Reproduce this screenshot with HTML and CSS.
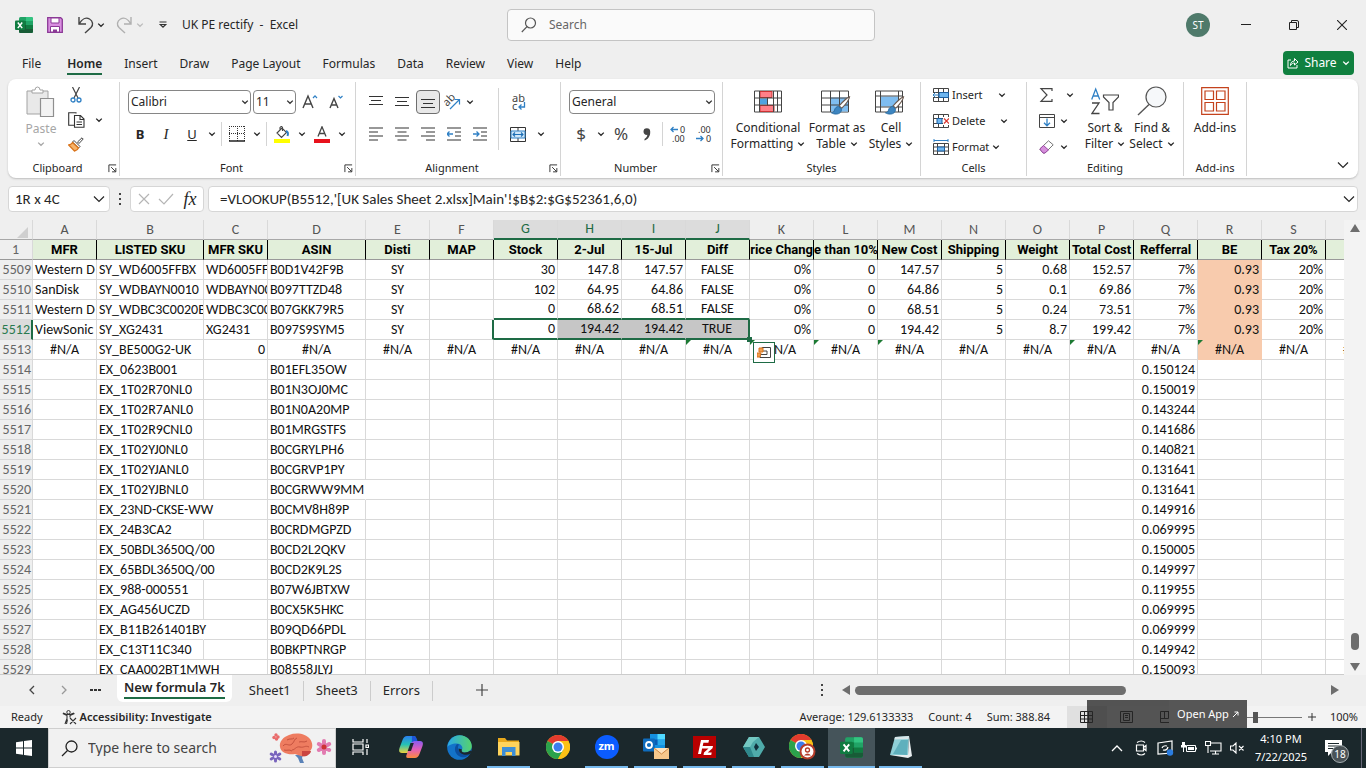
FILE: index.html
```html
<!DOCTYPE html>
<html lang="en">
<head>
<meta charset="utf-8">
<title>UK PE rectify - Excel</title>
<link rel="stylesheet" href="styles.css">
</head>
<body>
<svg class="defs" aria-hidden="true">
  <symbol id="chev" viewBox="0 0 8 8"><path d="M1.2 2.6 4 5.3 6.8 2.6" fill="none" stroke="currentColor" stroke-width="1.3"/></symbol>
  <symbol id="chevl" viewBox="0 0 12 12"><path d="M1 3.500 6 8.500l5-5" fill="none" stroke="currentColor" stroke-width="1.200"/></symbol>
  <symbol id="launch" viewBox="0 0 10 10"><path d="M1 9V1h8M3.500 3.500 8.300 8.300M4.500 8.700h4.200V4.500" fill="none" stroke="currentColor"/></symbol>
  <symbol id="brush" viewBox="0 0 24 22"><path d="M22.500 1.500c-3 .8-8 6-11.500 10l3 2.500c4-4 8-9.500 8.500-12.500z" fill="#fff" stroke="#6b5a50" stroke-width="1.200"/><path d="M10.500 12c-2 0-4 1.500-4.500 4-.3 1.700-1.800 2.800-3.500 3 3 2 8 2 10-.5 1.300-1.600 1.300-3 .8-4.200z" fill="#3d85c0" stroke="#26699f"/></symbol>
  <symbol id="excel" viewBox="0 0 18 18"><rect x="4" y="1" width="14" height="16" rx="1.500" fill="#21a366"/><path d="M11 1h5.500A1.500 1.500 0 0 1 18 2.500V5h-7z" fill="#33c481"/><path d="M4 5h7v4H4z" fill="#107c41"/><path d="M11 9h7v4h-7z" fill="#107c41"/><path d="M4 9h7v8H5.500A1.500 1.500 0 0 1 4 15.500zM11 13h7v2.500a1.500 1.500 0 0 1-1.500 1.500H11z" fill="#185c37"/><rect y="4.500" width="10" height="9.500" rx="1" fill="#107c41"/><path d="m2.800 6.500 4.400 5.600M7.200 6.500l-4.400 5.600" stroke="#fff" stroke-width="1.500"/></symbol>
  <symbol id="chrome" viewBox="0 0 24 24"><circle cx="12" cy="12" r="12" fill="#fbc116"/><path d="M12 12 1.600 6A12 12 0 0 1 22.400 6z" fill="#e33b2e"/><path d="M1.600 6A12 12 0 0 0 12 24l5.200-9z" fill="#2ba24c"/><path d="M12 6h10.400A12 12 0 0 1 12 24l5.200-9z" fill="#fbc116"/><circle cx="12" cy="12" r="6" fill="#fff"/><circle cx="12" cy="12" r="4.500" fill="#3b7ded"/></symbol>
</svg>

<header class="titlebar">
  <div class="quick">
    <svg width="18" height="18"><use href="#excel"/></svg>
    <button aria-label="Save"><svg width="16" height="16" viewBox="0 0 16 16"><path d="M.7.7h13l1.600 1.600v13H.7z" fill="#d98fe0" stroke="#8b3a96" stroke-width="1.300"/><path d="M4 1h8v5H4zM3.500 9.500h9V15h-9z" fill="#fff" stroke="#8b3a96"/><path d="M6 12.500h4V15H6z" fill="#8b3a96"/></svg></button>
    <button class="undo" aria-label="Undo"><svg width="17" height="18" viewBox="0 0 17 18"><path d="M2 1v7h7M2.300 7.700C5 3 9 1 12.500 3s4 6 1.500 8.500L8 17" fill="none" stroke="#444" stroke-width="1.400"/></svg><svg width="8" height="8"><use href="#chev"/></svg></button>
    <button class="redo" aria-label="Redo"><svg width="17" height="18" viewBox="0 0 17 18"><path d="M15 1v7H8M14.700 7.700C12 3 8 1 4.500 3s-4 6-1.500 8.500L9 17" fill="none" stroke="#b0b0b0" stroke-width="1.400"/></svg><svg width="8" height="8"><use href="#chev"/></svg></button>
    <button aria-label="Customize"><svg width="10" height="8" viewBox="0 0 10 8"><path d="M1.500 1h7M2.300 3.500 5 6.200l2.700-2.700z" fill="none" stroke="#333" stroke-width="1.200"/></svg></button>
    <span class="doc">UK PE rectify&nbsp; -&nbsp; Excel</span>
  </div>
  <label class="search"><svg width="16" height="16" viewBox="0 0 16 16"><circle cx="9.500" cy="6" r="5" fill="none" stroke="#555" stroke-width="1.200"/><path d="M6 9.700.8 15" stroke="#555" stroke-width="1.200"/></svg><input type="text" placeholder="Search" aria-label="Search"></label>
  <div class="window">
    <span class="avatar">ST</span>
    <button aria-label="Minimize"><svg width="10" height="10"><path d="M0 4.500h10" stroke="#222"/></svg></button>
    <button aria-label="Restore"><svg width="10" height="10" viewBox="0 0 10 10"><path d="M.5 2.500h7v7h-7zM2.500 2.500V.5h5.500q1.500 0 1.500 1.500v5.500H7.500" fill="none" stroke="#222"/></svg></button>
    <button aria-label="Close"><svg width="10" height="10"><path d="m0 0 10 10M10 0 0 10" stroke="#222" stroke-width="1.100"/></svg></button>
  </div>
</header>

<nav class="menu">
  <a href="#">File</a><a href="#" class="on">Home</a><a href="#">Insert</a><a href="#">Draw</a><a href="#">Page Layout</a><a href="#">Formulas</a><a href="#">Data</a><a href="#">Review</a><a href="#">View</a><a href="#">Help</a>
  <button class="share"><svg width="12" height="12" viewBox="0 0 12 12"><path d="M4 3H1v8h9V8M3.500 8.500C3.500 5.500 5 4 7.500 4V1.500L11 5 7.500 8V6C6 6 4.500 6.500 3.500 8.500z" fill="none" stroke="#fff"/></svg>Share<svg width="8" height="8"><use href="#chev"/></svg></button>
</nav>

<section class="ribbon">
  <div class="group clip">
    <div class="body">
      <button class="paste"><svg width="30" height="32" viewBox="0 0 30 32"><path d="M1 5h21v23H1z" fill="#e9e9e9" stroke="#a3a3a3"/><path d="M6 7V4h3q0-3 2.500-3T14 4h3v3z" fill="#fff" stroke="#a3a3a3"/><path d="M14.500 12.500h13v18h-13z" fill="#f3f3f3" stroke="#8f8f8f" stroke-width="1.200"/></svg><span>Paste</span><svg width="8" height="8"><use href="#chev"/></svg></button>
      <div class="stack">
        <button aria-label="Cut"><svg width="12" height="16" viewBox="0 0 12 16"><path d="M2.500 0 8 11M9.500 0 4 11" stroke="#444" stroke-width="1.200"/><circle cx="3" cy="13" r="2" fill="none" stroke="#2f80c5" stroke-width="1.300"/><circle cx="9" cy="13" r="2" fill="none" stroke="#2f80c5" stroke-width="1.300"/></svg></button>
        <button aria-label="Copy"><svg width="17" height="16" viewBox="0 0 17 16"><path d="M8 1.500V.7H.7v12.500H6M6.500 3.500h6l3.500 3.500v8.300H6.500zM12 3.500V7.500h4M8.500 10h5.500M8.500 12.500h5.500" fill="none" stroke="#333" stroke-width="1.100"/></svg></button>
        <button aria-label="Format Painter"><svg width="16" height="15" viewBox="0 0 16 15"><path d="M9.500 5 14 .8l1.200 1.200L11 6.500z" fill="#fff" stroke="#444"/><path d="m6 3.500 6 6-1.500 1.500-6-6z" fill="#fff" stroke="#444"/><path d="M4.500 5.500C3.500 7 2 7.800.7 8L6.500 14c2-.5 3.300-1.500 4-3z" fill="#f6b36a" stroke="#d9731a" stroke-width="1.300"/></svg></button>
      </div>
      <button class="ch" aria-label="Copy options"><svg width="8" height="8"><use href="#chev"/></svg></button>
    </div>
    <div class="cap"><span>Clipboard</span><button aria-label="Clipboard settings"><svg width="9" height="9"><use href="#launch"/></svg></button></div>
  </div>

  <div class="group font">
    <div class="body rows">
      <div class="row"><select class="fname" aria-label="Font"><option>Calibri</option></select><select class="fsize" aria-label="Font size"><option>11</option></select>
        <button class="ib grow" aria-label="Increase font size"><svg width="16" height="16" viewBox="0 0 16 16"><path d="M1 14 6 2l5 12M2.800 10h6.400" fill="none" stroke="#444" stroke-width="1.400"/><path d="m11 4 2-2.200L15 4" fill="none" stroke="#2f80c5" stroke-width="1.200"/></svg></button>
        <button class="ib" aria-label="Decrease font size"><svg width="14" height="16" viewBox="0 0 14 16"><path d="M1 14 5 4.500 9 14M2.500 11h5" fill="none" stroke="#444" stroke-width="1.400"/><path d="m9.500 2 2 2 2-2" fill="none" stroke="#2f80c5" stroke-width="1.200"/></svg></button></div>
      <div class="row"><button class="ib glyph"><b>B</b></button><button class="ib glyph"><i>I</i></button><button class="ib glyph"><u>U</u></button><button class="ch" aria-label="Underline options"><svg width="8" height="8"><use href="#chev"/></svg></button><span class="sep"></span>
        <button class="ib" aria-label="Borders"><svg width="16" height="16" viewBox="0 0 16 16"><path d="M0 .5h16M0 7.500h16M.5 0v15M8.500 0v15M15.500 0v15" fill="none" stroke="#333" stroke-dasharray="1 1"/><path d="M0 15h16" stroke="#222" stroke-width="1.500"/></svg></button><button class="ch" aria-label="Border options"><svg width="8" height="8"><use href="#chev"/></svg></button><span class="sep"></span>
        <button class="ib" aria-label="Fill color"><svg width="16" height="17" viewBox="0 0 16 17"><path d="m3 7 5-5 4.500 4.500-5 5zM6 4V1.500q1.500-2 2.500 0V5" fill="#fff" stroke="#444" stroke-width="1.100"/><path d="M12 5q3 1 1.500 5" fill="none" stroke="#2f80c5" stroke-width="2"/><path d="M0 13h16v4H0z" fill="#ff0"/></svg></button><button class="ch" aria-label="Fill options"><svg width="8" height="8"><use href="#chev"/></svg></button>
        <button class="ib" aria-label="Font color"><svg width="16" height="17" viewBox="0 0 16 17"><path d="M4 10.500 8 .8l4 9.700M5.300 7.500h5.400" fill="none" stroke="#444" stroke-width="1.300"/><path d="M0 13h16v4H0z" fill="#e8111c"/></svg></button><button class="ch" aria-label="Font color options"><svg width="8" height="8"><use href="#chev"/></svg></button></div>
    </div>
    <div class="cap"><span>Font</span><button aria-label="Font settings"><svg width="9" height="9"><use href="#launch"/></svg></button></div>
  </div>

  <div class="group align">
    <div class="body two">
      <div class="rows">
      <div class="row"><button class="ib" aria-label="Top align"><svg width="14" height="14"><path d="M0 1.500h14M2 5.500h10M0 9.500h14" stroke="#333" stroke-width="1.200"/></svg></button><button class="ib" aria-label="Middle align"><svg width="14" height="14"><path d="M0 2.500h14M2 6.500h10M0 10.500h14" stroke="#333" stroke-width="1.200"/></svg></button><button class="ib on" aria-label="Bottom align"><svg width="14" height="14"><path d="M0 4.500h14M2 8.500h10M0 12.500h14" stroke="#333" stroke-width="1.200"/></svg></button>
        <button class="ib orient" aria-label="Orientation"><svg width="17" height="16" viewBox="0 0 17 16"><text x="0" y="10" transform="rotate(-45 5 8)" class="ab">ab</text><path d="m6 15 9-9M10.500 5.500h5v5" fill="none" stroke="#2f80c5" stroke-width="1.200"/></svg></button><button class="ch" aria-label="Orientation options"><svg width="8" height="8"><use href="#chev"/></svg></button></div>
      <div class="row"><button class="ib" aria-label="Align left"><svg width="14" height="14"><path d="M0 1h14M0 5h9M0 9h14M0 13h9" stroke="#333" stroke-width="1.200"/></svg></button><button class="ib" aria-label="Center"><svg width="14" height="14"><path d="M0 1h14M2.500 5h9M0 9h14M2.500 13h9" stroke="#333" stroke-width="1.200"/></svg></button><button class="ib" aria-label="Align right"><svg width="14" height="14"><path d="M0 1h14M5 5h9M0 9h14M5 13h9" stroke="#333" stroke-width="1.200"/></svg></button><button class="ib" aria-label="Decrease indent"><svg width="14" height="14"><path d="M0 1h14M8 5h6M8 9h6M0 13h14" stroke="#333" stroke-width="1.200"/><path d="M0 7h6M2.500 4.500 0 7l2.500 2.500" fill="none" stroke="#2f80c5" stroke-width="1.300"/></svg></button><button class="ib" aria-label="Increase indent"><svg width="14" height="14"><path d="M0 1h14M8 5h6M8 9h6M0 13h14" stroke="#333" stroke-width="1.200"/><path d="M0 7h6M3.500 4.500 6 7 3.500 9.500" fill="none" stroke="#2f80c5" stroke-width="1.300"/></svg></button></div>
      </div><span class="sep tall"></span>
      <div class="rows">
      <div class="row"><button class="ib" aria-label="Wrap text"><svg width="15" height="18" viewBox="0 0 15 18"><text x="1" y="9" class="ab">ab</text><text x="1" y="17" class="ab">c</text><path d="M13.500 9v5H8M10.500 11.500 8 14l2.500 2.500" fill="none" stroke="#2f80c5" stroke-width="1.300"/></svg></button></div>
      <div class="row"><button class="ib" aria-label="Merge"><svg width="16" height="15" viewBox="0 0 16 15"><path d="M.5.5h15v14H.5zM8 .5V4M8 11v3.500" fill="#fff" stroke="#333"/><path d="M1 4h14v7H1z" fill="#cfe6f8" stroke="#2f80c5"/><path d="M3 7.500h10M5 5.500l-2 2 2 2M11 5.500l2 2-2 2" fill="none" stroke="#1d6fb5" stroke-width="1.100"/></svg></button><button class="ch wide" aria-label="Merge options"><svg width="8" height="8"><use href="#chev"/></svg></button></div>
      </div>
    </div>
    <div class="cap"><span>Alignment</span><button aria-label="Alignment settings"><svg width="9" height="9"><use href="#launch"/></svg></button></div>
  </div>

  <div class="group number">
    <div class="body rows">
      <div class="row"><select class="fmt" aria-label="Number format"><option>General</option></select></div>
      <div class="row"><button class="ib big">$</button><button class="ch" aria-label="Currency options"><svg width="8" height="8"><use href="#chev"/></svg></button><button class="ib big">%</button><button class="ib" aria-label="Comma style"><svg width="8" height="13" viewBox="0 0 8 13"><path d="M.5 3.500a3.300 3.300 0 0 1 6.700 0C7.500 8 5 11.500 1.500 12.500V11C3.500 10 4.200 8.500 4.300 6.800 2.500 7.200.5 6 .5 3.500z" fill="#444"/></svg></button><span class="sep"></span>
        <button class="ib" aria-label="Increase decimal"><svg width="17" height="18" viewBox="0 0 17 18"><path d="M1 4.500h7M3.500 2 1 4.500 3.500 7" fill="none" stroke="#2f80c5" stroke-width="1.300"/><text x="10" y="8" class="num">0</text><text x="2" y="17" class="num">.00</text></svg></button><button class="ib" aria-label="Decrease decimal"><svg width="17" height="18" viewBox="0 0 17 18"><text x="2" y="8" class="num">.00</text><path d="M0 13.500h7M4.500 11 7 13.500 4.500 16" fill="none" stroke="#2f80c5" stroke-width="1.300"/><text x="10" y="17" class="num">0</text></svg></button></div>
    </div>
    <div class="cap"><span>Number</span><button aria-label="Number settings"><svg width="9" height="9"><use href="#launch"/></svg></button></div>
  </div>

  <div class="group styles">
    <div class="body">
      <button class="large w1"><svg width="28" height="27" viewBox="0 0 28 27"><path d="M.5 3.500h27v21H.5z" fill="#fff" stroke="#444"/><path d="M6 4h12v6H6zM6 18h14v6H6z" fill="#ff8088" stroke="#c33"/><path d="M6 11h7v6H6z" fill="#4fa3e0"/><path d="M5.500 3.500v21M13.500 10v8M19.500 3.500v21M23.500 3.500v21M.5 10.500h27M.5 17.500h27" fill="none" stroke="#444"/></svg><span>Conditional</span><span>Formatting <svg width="8" height="8"><use href="#chev"/></svg></span></button>
      <button class="large w2"><svg width="32" height="27" viewBox="0 0 32 27"><path d="M.5 3.500h27v21H.5z" fill="#fff" stroke="#444"/><path d="M10 10h17v14H10z" fill="#7fbdf0"/><path d="M9.500 3.500v21M18.500 3.500v21M.5 10.500h27M.5 17.500h27" fill="none" stroke="#444"/><use href="#brush" x="7" y="8" width="24" height="20"/></svg><span>Format as</span><span>Table <svg width="8" height="8"><use href="#chev"/></svg></span></button>
      <button class="large w3"><svg width="32" height="27" viewBox="0 0 32 27"><path d="M.5 3.500h27v21H.5z" fill="#fff" stroke="#444"/><path d="M6 9h17v10H6z" fill="#7fbdf0"/><path d="M5.500 3.500v21M23.500 3.500v21M.5 8.500h27M.5 19.500h27" fill="none" stroke="#444"/><use href="#brush" x="7" y="8" width="24" height="20"/></svg><span>Cell</span><span>Styles <svg width="8" height="8"><use href="#chev"/></svg></span></button>
    </div>
    <div class="cap plain"><span>Styles</span></div>
  </div>

  <div class="group cells">
    <div class="body stack">
      <button><svg width="16" height="14" viewBox="0 0 16 14"><path d="M.5.5h15v13H.5zM5.500.5v13M10.500.5v13M.5 4.500h15M.5 9.500h15" fill="#fff" stroke="#444"/><path d="M6 4.500h9.500v5H6z" fill="#6fb6ef" stroke="#1d5fa0"/><path d="M0 5h5v4H0z" fill="#fff"/><path d="M0 7h6M2.500 4.500 0 7l2.500 2.500" fill="none" stroke="#2f80c5"/></svg><span class="lb">Insert</span><svg class="far" width="8" height="8"><use href="#chev"/></svg></button>
      <button><svg width="16" height="14" viewBox="0 0 16 14"><path d="M.5.500h15v13H.5zM5.500.5v13M10.500.5v13M.5 4.500h15M.5 9.500h15" fill="#fff" stroke="#444"/><path d="M4 4.500h5v5H4z" fill="#6fb6ef" stroke="#1d5fa0"/><path d="M10 3h6v8h-6z" fill="#fff"/><path d="m11 4.500 5 5M16 4.500l-5 5" stroke="#d9362f" stroke-width="1.200"/></svg><span class="lb">Delete</span><svg class="far" width="8" height="8"><use href="#chev"/></svg></button>
      <button><svg width="16" height="16" viewBox="0 0 16 16"><path d="M.5 4.500h15v11H.5zM4.500 4.500v11M11.500 4.500v11M.5 8h15M.5 12h15" fill="#fff" stroke="#444"/><path d="M4.500 8h7v4h-7z" fill="#6fb6ef" stroke="#1d5fa0"/><path d="M1 1.500h14M1 0v3M15 0v3" stroke="#2f80c5"/></svg><span class="lb">Format</span><svg width="8" height="8"><use href="#chev"/></svg></button>
    </div>
    <div class="cap plain"><span>Cells</span></div>
  </div>

  <div class="group editing">
    <div class="body">
      <div class="stack">
        <button class="sum" aria-label="AutoSum"><svg width="16" height="14" viewBox="0 0 16 14"><path d="M13 3V.7H2L8 7l-6 6.300h11V11" fill="none" stroke="#444" stroke-width="1.200"/></svg><svg width="8" height="8"><use href="#chev"/></svg></button>
        <button aria-label="Fill"><svg width="16" height="14" viewBox="0 0 16 14"><path d="M.5.5h15v13H.5zM.5 3.500h15" fill="#fff" stroke="#444"/><path d="M8 4.500v7M5 8.800l3 3 3-3" fill="none" stroke="#2f80c5" stroke-width="1.300"/></svg><svg width="8" height="8"><use href="#chev"/></svg></button>
        <button aria-label="Clear"><svg width="16" height="14" viewBox="0 0 16 14"><path d="M.8 9 9.500.8l4.700 4L6 13H4z" fill="#fff" stroke="#777"/><path d="m.8 9 3.700-3.500L9.500 10 6 13H4z" fill="#d68fdc" stroke="#9a4ba3"/></svg><svg width="8" height="8"><use href="#chev"/></svg></button>
      </div>
      <button class="large w4"><svg width="28" height="27" viewBox="0 0 28 27"><path d="m.7 12 4-10.500L8.700 12M2 8.500h5.300" fill="none" stroke="#2f80c5" stroke-width="1.300"/><path d="M1 15.500h7L1 26h7.500" fill="none" stroke="#444" stroke-width="1.300"/><path d="M12.500 7.500h15v2L22 15v7.500h-4V15l-5.500-5.500z" fill="#fff" stroke="#444" stroke-width="1.200"/></svg><span>Sort &amp;</span><span>Filter <svg width="8" height="8"><use href="#chev"/></svg></span></button>
      <button class="large w5"><svg width="30" height="30" viewBox="0 0 30 30"><circle cx="19" cy="11" r="10" fill="#f6f8fa" stroke="#555" stroke-width="1.200"/><path d="M12 18.500 1 29" stroke="#555" stroke-width="1.400"/></svg><span>Find &amp;</span><span>Select <svg width="8" height="8"><use href="#chev"/></svg></span></button>
    </div>
    <div class="cap plain"><span>Editing</span></div>
  </div>

  <div class="group addins">
    <div class="body">
      <button class="large w6"><svg width="28" height="28" viewBox="0 0 28 28"><path d="M.7.7h26.600v26.600H.7zM4 4h8.500v8.500H4zM15.500 4H24v8.500h-8.500zM4 15.500h8.500V24H4zM15.500 15.500H24V24h-8.500z" fill="none" stroke="#c4421c" stroke-width="1.200"/></svg><span>Add-ins</span></button>
    </div>
    <div class="cap plain"><span>Add-ins</span></div>
  </div>
  <button class="collapse" aria-label="Collapse ribbon"><svg width="12" height="12"><use href="#chevl"/></svg></button>
</section>

<section class="formula">
  <div class="box namebox"><input type="text" value="1R x 4C" aria-label="Name box"><button aria-label="Names"><svg width="12" height="12"><use href="#chevl"/></svg></button></div>
  <svg class="dots" width="4" height="14"><path d="M1 1h2v2H1zM1 6h2v2H1zM1 11h2v2H1z" fill="#444"/></svg>
  <div class="box tools"><button aria-label="Cancel"><svg width="12" height="12"><path d="m1 1 10 10M11 1 1 11" stroke="#b5b5b5" stroke-width="1.200"/></svg></button><button aria-label="Enter"><svg width="16" height="12"><path d="m1 6 5 5L15 1" fill="none" stroke="#b5b5b5" stroke-width="1.200"/></svg></button><button class="fx"><i>fx</i></button></div>
  <div class="box formbox"><input type="text" value="=VLOOKUP(B5512,'[UK Sales Sheet 2.xlsx]Main'!$B$2:$G$52361,6,0)" aria-label="Formula"><button aria-label="Expand"><svg width="12" height="12"><use href="#chevl"/></svg></button></div>
</section>

<main class="sheet">
  <div class="gridwrap">
    <table class="grid"><colgroup id="cols"></colgroup><thead id="letters"></thead><tbody id="cells"></tbody></table>
  </div>
  <div class="vscroll"><svg width="10" height="8"><path d="M0 8 5 0l5 8z" fill="#6e6e6e"/></svg><span class="track"></span><span class="thumb"></span><svg width="10" height="8"><path d="m0 0 5 8 5-8z" fill="#6e6e6e"/></svg></div>
</main>

<section class="sheets">
  <button aria-label="Previous sheet"><svg width="8" height="10"><path d="M6 1 2 5l4 4" fill="none" stroke="#444" stroke-width="1.300"/></svg></button>
  <button aria-label="Next sheet"><svg width="8" height="10"><path d="m2 1 4 4-4 4" fill="none" stroke="#999" stroke-width="1.300"/></svg></button>
  <button aria-label="More sheets"><svg width="12" height="4"><path d="M0 1h3v2H0zM4 1h3v2H4zM8 1h3v2H8z" fill="#333"/></svg></button>
  <a href="#" class="on"><span>New formula 7k</span></a><a href="#">Sheet1</a><a href="#">Sheet3</a><a href="#">Errors</a>
  <button class="plus" aria-label="New sheet"><svg width="12" height="12"><path d="M6 0v12M0 6h12" stroke="#444" stroke-width="1.200"/></svg></button>
  <div class="hscroll"><svg class="dots" width="4" height="14"><path d="M1 1h2v2H1zM1 6h2v2H1zM1 11h2v2H1z" fill="#444"/></svg><svg width="8" height="10"><path d="M8 0 0 5l8 5z" fill="#6e6e6e"/></svg><span class="bar"><span class="thumb"></span></span><svg width="8" height="10"><path d="m0 0 8 5-8 5z" fill="#6e6e6e"/></svg></div>
</section>

<footer class="status">
  <span>Ready</span>
  <button class="acc"><svg width="15" height="15" viewBox="0 0 15 15"><circle cx="6.500" cy="2.200" r="1.700" fill="none" stroke="#333"/><path d="M.8 3.500 5 5.500v3L3 14M12.500 3.500 8 5.500v2M1 3l4 1.500h3L12 3M5.500 9.500 4.500 14M8 8l6 6M14 8l-6 6" fill="none" stroke="#333" stroke-width="1.100"/></svg><b>Accessibility: Investigate</b></button>
  <div class="stats"><span>Average: 129.6133333</span><span>Count: 4</span><span>Sum: 388.84</span></div>
  <div class="views">
    <button class="on" aria-label="Normal"><svg width="13" height="12"><path d="M.5.500h12v11H.5zM4.500.5v11M8.500.5v11M.5 4.500h12M.5 8h12" fill="none" stroke="#222"/></svg></button>
    <button aria-label="Page layout"><svg width="13" height="12"><path d="M.5.500h12v11H.5zM3.500 2.500h6v7h-6zM5 4.500h3M5 6.500h3" fill="none" stroke="#222"/></svg></button>
    <button aria-label="Page break"><svg width="13" height="12"><path d="M.5.500h12v11H.5zM4.500.5v7M8.500.5v7M.5 7.500h8" fill="none" stroke="#222"/></svg></button>
  </div>
  <input class="zoom" type="range" min="0" max="100" value="60" aria-label="Zoom">
  <button class="zin" aria-label="Zoom in"><svg width="8" height="8"><path d="M4 0v8M0 4h8" stroke="#333"/></svg></button>
  <span class="pct100">100%</span>
  <div class="openapp"><a href="#">Open App <svg width="7" height="7"><path d="M1 6 6 1M2.500 1H6v3.500" fill="none" stroke="#fff"/></svg></a></div>
</footer>

<div class="taskbar">
  <button class="start" aria-label="Start"><svg width="16" height="16" viewBox="0 0 16 16"><path d="M0 2.300 7 1.200v6.300H0zM8 1l8-1v7.500H8zM0 8.500h7v6.300L0 13.700zM8 8.500h8V16l-8-1z" fill="#fff"/></svg></button>
  <label class="tsearch"><svg width="17" height="17" viewBox="0 0 17 17"><circle cx="10.500" cy="6.500" r="5.500" fill="none" stroke="#222" stroke-width="1.300"/><path d="M6.500 10.500 1 16" stroke="#222" stroke-width="1.300"/></svg><input type="text" placeholder="Type here to search" aria-label="Type here to search">
    <svg width="66" height="32" viewBox="0 0 66 32"><g fill="#e96b6b"><circle cx="8" cy="3" r="1.700"/><circle cx="10" cy="5" r="1.700"/><circle cx="6" cy="5.500" r="1.700"/><circle cx="8.500" cy="7" r="1.700"/></g><path d="M27 23h8l-1 3 2 5h-4l-2-5z" fill="#5b83b8"/><path d="M12 15c-1-5 3-10 9-12 8-3 17-1 21 4 3 4 3 9 0 12-1 4-5 6-9 5l-6-2c-7 1-14-1-15-7z" fill="#ee7c60"/><path d="M34 19h9c-1 4-5 6-9 5z" fill="#cb4540"/><path d="M15 14c3-4 6 1 9-2s2-5 5-6M19 8c3-2 5 0 7-2M24 18c3 0 4-4 8-3s5-2 9 0M31 10c3-1 5 1 8-1M16 18c3 1 5-1 8 1" fill="none" stroke="#c5523f"/><g stroke="#7964bd" stroke-width="3" stroke-linecap="round"><path d="M7.500 20v9M3.200 22l8.600 5M3.200 27l8.600-5"/></g><circle cx="7.500" cy="24.500" r="1.500" fill="#e8d9ff"/><g stroke="#e27bb0" stroke-width="4" stroke-linecap="round"><path d="M56 9v12M50.800 12l10.400 6M50.800 18l10.400-6"/></g><circle cx="56" cy="15" r="2.500" fill="#c33"/></svg></label>
  <button class="task" aria-label="Task view"><svg width="17" height="16" viewBox="0 0 17 16"><path d="M1 0v3h10V0M1 16v-3h10v3M1 5h10v6H1zM15 0v4M15 10v6M14 6h2.500v2.500H14z" fill="none" stroke="#fff" stroke-width="1.200"/></svg></button>
  <button class="task" aria-label="Copilot"><svg width="24" height="22" viewBox="0 0 24 22"><defs><linearGradient id="cp1" x1="0" y1="0" x2="0" y2="1"><stop offset="0" stop-color="#2a7ff0"/><stop offset=".5" stop-color="#25c2b5"/><stop offset="1" stop-color="#ecd23c"/></linearGradient><linearGradient id="cp2" x1="0" y1="0" x2="0" y2="1"><stop offset="0" stop-color="#8a5bf0"/><stop offset=".5" stop-color="#e45fb8"/><stop offset="1" stop-color="#fa8a3c"/></linearGradient></defs><path d="M8 0h7q2.500 0 1.500 3l-4 11q-1 3-4 3H3q-4 0-2.500-5L3.500 4Q5 0 8 0z" fill="url(#cp1)"/><path d="M16 22H9q-2.500 0-1.500-3l4-11q1-3 4-3H21q4 0 2.500 5l-3 8q-1.500 4-4.500 4z" fill="url(#cp2)"/><path d="M13 0h2q2 0 2.700 2.500L18.500 5h-3q-2 0-2.700 1.500z" fill="#1d55d8"/><path d="M11.500 7h3.300L12 15H8.700z" fill="#1b282c"/></svg></button>
  <button class="task" aria-label="Edge"><svg width="25" height="25" viewBox="0 0 25 25"><defs><linearGradient id="eg" x1="0" y1="0" x2="1" y2="0"><stop offset="0" stop-color="#2aa8e8"/><stop offset="1" stop-color="#56d36c"/></linearGradient></defs><circle cx="12.500" cy="12.500" r="12.300" fill="#1373c9"/><path d="M.3 12C1.500 4.500 7 .2 12.500.2 20 .2 25 6 24.800 11.500c-.3 4-4 6-7.500 6-2.500 0-3.500-1.500-2.500-2.500 2-3-1-6.500-5-6.500-5 0-8.500 2-9.500 3.500z" fill="url(#eg)"/><path d="M10 9c-4 4-2 11 4 13 4 1.200 7.500-1 9.500-4 0 0-5 2-9 0-3.500-2-4.500-5.500-2.500-8.500z" fill="#0c4fa0"/><path d="M15 14.500c-1 1.500 0 3 2.500 3 2.500 0 4.500-.7 5.800-2l1.500 1-1.800 2.500c-2.500 1-6 1.200-8.700-.5-2-1.300-2.800-3-2.700-5z" fill="#1b282c"/></svg></button>
  <button class="task open" aria-label="File Explorer"><svg width="23" height="20" viewBox="0 0 23 20"><path d="M1 1h7l2 2.500h12V18H1z" fill="#e9a91c"/><path d="M1 5h21.500v13.500H1z" fill="#ffd45c"/><path d="M5 10h13.500v9H15v-4H8.500v4H5z" fill="#3e8fd6"/></svg></button>
  <button class="task" aria-label="Chrome"><svg width="24" height="24"><use href="#chrome"/></svg></button>
  <button class="task open" aria-label="Zoom"><span class="zm">zm</span></button>
  <button class="task open" aria-label="Outlook"><svg width="26" height="26" viewBox="0 0 26 26"><path d="M7 0h15v17H7z" fill="#1490df"/><path d="M14.500 0H22v5.500h-7.500z" fill="#50d9ff"/><path d="M14.500 5.500H22V11h-7.500z" fill="#28a8ea"/><path d="M7 5.500h7.500V11H7z" fill="#0a5db5"/><rect y="4.500" width="12" height="13" rx="1" fill="#0f6cbd"/><circle cx="6" cy="11" r="3" fill="none" stroke="#fff" stroke-width="1.800"/><path d="M11 14h15v11H11z" fill="#f7c88c"/><path d="m11 14 7.500 6 7.500-6" fill="#ffe2bb" stroke="#cf8945"/></svg></button>
  <button class="task open" aria-label="FileZilla"><svg width="23" height="22" viewBox="0 0 23 22"><path d="M0 0h23v22H0z" fill="#b80000"/><path d="M5 18 8 4h8l-.6 2.800h-5L9.700 10h4l-.6 2.500h-4L8 18zM13 10h7l-.5 2.300-4.800 4.200h4l-.5 2.500h-7.700l.5-2.500 4.500-4h-3z" fill="#fff"/></svg></button>
  <button class="task open" aria-label="Hex app"><svg width="22" height="20" viewBox="0 0 22 20"><path d="M6 0h10l6 10-6 10H6L0 10z" fill="#4fabaa"/><path d="M6 0h10l-6 5-3 5H0z" fill="#74c8c2"/><path d="M7 10l4 10H6L0 10z" fill="#2f888c"/><path d="m13 6 3 4-3 4-2-4z" fill="#10303c"/></svg></button>
  <button class="task open" aria-label="Chrome profile"><svg width="27" height="26" viewBox="0 0 27 26"><use href="#chrome" width="24" height="24"/><circle cx="18.500" cy="17.500" r="7" fill="#fff" stroke="#b43c2a" stroke-width="2"/><circle cx="18.500" cy="16" r="2" fill="none" stroke="#b43c2a" stroke-width="1.300"/><path d="M15 21.500q3.500-4 7 0z" fill="#b43c2a"/></svg></button>
  <button class="task open active" aria-label="Excel"><svg width="23" height="23"><use href="#excel"/></svg></button>
  <button class="task open" aria-label="Notepad"><svg width="24" height="23" viewBox="0 0 24 23"><path d="M6 1 20 0l-1 20-18-1z" fill="#8fd0d8"/><path d="m20 0 3 20-4 2-18-3 18 0z" fill="#e8eef0"/><path d="M6 1 20 0l-.4 3-14.300.5z" fill="#d9e6e8"/><path d="m12 4-8 14 14 1 1-15z" fill="#5fb0bd"/></svg></button>
  <div class="tray">
    <button aria-label="Hidden icons"><svg width="12" height="8"><path d="m1 7 5-5 5 5" fill="none" stroke="#fff" stroke-width="1.300"/></svg></button>
    <button aria-label="Meet"><svg width="13" height="16" viewBox="0 0 13 16"><path d="M1.500 5h7v6h-7zM8.500 7.500 11 5.500v5L8.500 8.500M2 2.500q4.500-3 8 0M2 13.500q4.500 3 8 0" fill="none" stroke="#fff" stroke-width="1.200"/></svg></button>
    <button aria-label="Sync"><svg width="17" height="16" viewBox="0 0 17 16"><path d="M1 3 15 1v12L1 14zM5 8q1-3 5-2M11 7q-1 4-5 3" fill="none" stroke="#fff" stroke-width="1.200"/><circle cx="13" cy="12.500" r="3.200" fill="#2b7de0"/></svg></button>
    <button aria-label="Battery"><svg width="16" height="12" viewBox="0 0 16 12"><path d="M5.500 3.500h9v6h-9zM15.500 5.500v2" fill="none" stroke="#fff"/><path d="M7 5h6v3H7zM1 0v3h3V0M0 3h5v2.500H0zM2 5h1v5H2z" fill="#fff"/></svg></button>
    <button aria-label="Network"><svg width="17" height="14" viewBox="0 0 17 14"><path d="M5 2h11v8H5M10.500 10v3M7 13h7M.5.5h5v4h-5zM3 4.500V12" fill="none" stroke="#fff" stroke-width="1.100"/></svg></button>
    <button aria-label="Volume muted"><svg width="15" height="12" viewBox="0 0 15 12"><path d="M.5 4h2.500l3-3v10l-3-3H.5zM9 4l4.500 4.500M13.500 4 9 8.500" fill="none" stroke="#fff" stroke-width="1.100"/></svg></button>
    <div class="clock"><span>4:10 PM</span><span>7/22/2025</span></div>
    <button class="note" aria-label="Notifications"><svg width="17" height="17" viewBox="0 0 17 17"><path d="M0 0h17v12H7l-4 4v-4H0z" fill="#fff"/><path d="M3 3.500h11M3 6h11M3 8.500h8" stroke="#1b282c"/></svg><span class="badge">18</span></button>
    <span class="edge"></span>
  </div>
</div>
<script src="app.js"></script>
</body>
</html>
```
FILE: styles.css
```css
* { box-sizing: border-box; }
body { margin: 0; height: 100vh; display: flex; flex-direction: column; overflow: hidden; background: #efefef; color: #262626; font: 12px/16px "Noto Sans", "Open Sans", sans-serif; }
button { border: 0; background: none; padding: 0; margin: 0; font: inherit; color: inherit; display: flex; align-items: center; justify-content: center; flex: none; }
input { font: inherit; color: inherit; border: 0; background: none; padding: 0; min-width: 0; outline: 0; }
a { color: inherit; text-decoration: none; }
svg { flex: none; display: block; }
.defs { position: absolute; width: 0; height: 0; }

.titlebar { height: 48px; flex: none; display: grid; grid-template-columns: 507fr 368px 491fr; align-items: center; padding-top: 1px; }
.quick { display: flex; align-items: center; padding-left: 15px; gap: 14px; }
.undo, .redo { gap: 3px; }
.redo { color: #bbb; }
.undo { margin-right: -3px; }
.search { display: flex; align-items: center; gap: 12px; height: 32px; padding: 0 13px; background: #fafafa; border: 1px solid #c4c4c4; border-radius: 4px; }
.search input { flex: 1; }
.search input::placeholder { color: #666; opacity: 1; }
.window { display: flex; justify-content: flex-end; align-items: center; }
.window button { width: 48px; height: 32px; }
.avatar { width: 24px; height: 24px; border-radius: 50%; background: #4f7a6b; color: #fff; font-size: 10px; line-height: 24px; text-align: center; margin-right: 12px; }

.menu { height: 31px; flex: none; display: flex; align-items: flex-start; padding: 3px 12px 0 22px; gap: 22px; }
.menu a { padding-top: 5px; height: 24px; }
.menu a:first-child { margin-right: 4px; }
.menu .on { font-weight: 600; border-bottom: 2px solid #1e6b45; }
.share { margin-left: auto; width: 71px; height: 24px; gap: 5px; background: #10803f; color: #fff; border-radius: 4px; }

.ribbon { margin: 0 8px; flex: none; height: 99px; display: flex; background: #fff; border-radius: 8px; box-shadow: 0 1px 2px #bdbdbd; }
.group { display: flex; flex-direction: column; flex: none; border-right: 1px solid #d4d4d4; margin: 3px 0 2px; }
.body { flex: 1; min-height: 0; display: flex; }
.cap { flex: none; display: flex; height: 16px; font-size: 11px; align-items: center; padding-left: 2px; }
.cap span { flex: 1; text-align: center; }
.cap button { width: 14px; height: 14px; }
.cap.plain { padding: 0; }
.clip { width: 112px; }
.font { width: 236px; }
.align { width: 205px; }
.number { width: 162px; }
.styles { width: 198px; }
.cells { width: 106px; }
.editing { width: 157px; }
.addins { width: 63px; }
.paste { flex-direction: column; justify-content: flex-start; color: #a6a6a6; width: 38px; margin-left: 14px; gap: 3px; padding-top: 4px; }
.stack { display: flex; flex-direction: column; }
.stack button { height: 26px; }
.clip .stack button { width: 32px; height: 25px; }
.clip .ch { margin-top: 31px; width: 14px; height: 14px; }
.rows { display: flex; flex-direction: column; gap: 6px; padding-top: 7px; }
.font .rows, .number .rows { padding-left: 7px; }
.row { display: flex; align-items: center; height: 26px; }
.ib { width: 26px; height: 26px; border-radius: 4px; }
.ib.on { width: 24px; height: 24px; margin: 0 1px; background: #e8e8e8; border: 1px solid #6e6e6e; }
.orient { width: 22px; }
.ch { width: 14px; height: 26px; }
.ch.wide { width: 20px; }
.glyph { font-size: 13px; }
.glyph i { font-family: "Liberation Serif", serif; font-size: 15px; }
.sep { width: 1px; height: 24px; background: #d4d4d4; margin: 0 2px; }
.sep.tall { height: 62px; margin: 6px 6px 0 5px; }
.two { padding-left: 7px; }
.ab { font: 11px "Noto Sans", sans-serif; fill: #444; }
.num { font: 9px "Noto Sans", sans-serif; fill: #333; }
select { appearance: none; font: inherit; color: inherit; height: 24px; border: 1px solid #868686; border-radius: 4px; padding: 0 2px; background: #fff url("data:image/svg+xml,%3Csvg xmlns='http://www.w3.org/2000/svg' width='8' height='8'%3E%3Cpath d='M1.200 2.600 4 5.300 6.800 2.600' fill='none' stroke='%23333' stroke-width='1.300'/%3E%3C/svg%3E") no-repeat right 1px center; }
.fname { width: 123px; margin-left: 1px; margin-right: 2px; }
.fsize { width: 43px; }
.grow { margin-left: 1px; }
.fmt { width: 146px; margin-left: 1px; }
.big { font-size: 17px; color: #444; }
.large { flex-direction: column; justify-content: flex-start; padding-top: 4px; }
.large > span { display: flex; align-items: center; gap: 4px; white-space: nowrap; }
.large > svg { height: 30px; margin-bottom: 4px; }
.w1 { width: 88px; }
.w2 { width: 50px; }
.w3 { width: 58px; }
.w4 { width: 50px; }
.w5 { width: 44px; }
.w6 { width: 62px; }
.styles .body { padding-left: 1px; }
.cells .stack { padding-left: 12px; align-items: flex-start; }
.cells button { gap: 3px; font-size: 11px; }
.cells .far { margin-left: 12px; }
.editing .stack { width: 53px; padding-left: 12px; align-items: flex-start; }
.editing .stack button { gap: 5px; }
.editing .stack .sum { gap: 11px; }
.collapse { margin: auto 9px 7px auto; }

.formula { margin: 7px 8px 7px; flex: none; height: 28px; display: flex; align-items: center; }
.box { height: 26px; display: flex; align-items: center; background: #fff; border: 1px solid #d6d6d6; border-radius: 4px; }
.box input { flex: 1; font: 15px/20px Carlito, Lato, sans-serif; }
.namebox { width: 102px; padding: 0 4px 0 6px; }
.formula .dots { margin: 0 8px 0 8px; }
.tools { width: 74px; gap: 8px; justify-content: center; }
.fx { font: 18px/20px "Liberation Serif", serif; padding-left: 2px; }
.formbox { flex: 1; margin-left: 4px; padding: 0 2px 0 11px; }

.sheet { flex: 1; min-height: 0; display: flex; }
.gridwrap { flex: 1; min-width: 0; overflow: hidden; background: #fff; border-bottom: 1px solid #ccc; }
.grid { table-layout: fixed; width: 1390px; border-collapse: separate; border-spacing: 0; font: 14px/18px Carlito, Lato, sans-serif; color: #111; }
.grid th, .grid td { height: 20px; padding: 0 2px; border-right: 1px solid #d9d9d9; border-bottom: 1px solid #d9d9d9; overflow: hidden; white-space: nowrap; font-weight: 400; position: relative; }
.grid thead th { background: #efefef; color: #555; height: 19px; border-bottom-color: #a8a8a8; }
.grid thead th.sel { background: #dcdcdc; color: #1e6b45; border-bottom: 2px solid #1e6b45; }
.grid tbody th { background: #efefef; color: #666; text-align: right; padding: 0 1px 0 0; }
.grid tbody th.sel { background: #dcdcdc; color: #2a7a4f; border-right: 2px solid #1e6b45; }
.grid .head td { background: #e2efda; font: 700 13px/18px Roboto, sans-serif; text-align: center; padding: 0; border-right-color: #000; border-bottom-color: #999; color: #000; }
.grid tbody .head th { text-align: center; border-bottom-color: #999; }
.grid .r { text-align: right; }
.grid .c { text-align: center; }
.grid .spill { overflow: visible; border-right-color: transparent; }
.grid .be { background: #f8cbad; border-color: #f8cbad; }
.grid .pick { background: #c6c6c6; border-right-color: #c6c6c6; }
.grid .above, .grid .bot { border-bottom: 2px solid #1e6b45; }
.grid .edge-l { border-right: 2px solid #1e6b45; }
.grid .err::before { content: ""; position: absolute; left: 0; top: 0; border-top: 5px solid #1c7a33; border-right: 5px solid transparent; }
.grid td.quickcell { overflow: visible; }
.quickbtn { position: absolute; left: 3px; top: 2px; width: 22px; height: 21px; background: #fff; border: 1px solid #1e6b45; z-index: 2; }
.handle { position: absolute; left: -3px; top: -3px; width: 5px; height: 5px; background: #1e6b45; }
.corner { display: block; margin: 5px 0 0 15px; width: 0; border-left: 11px solid transparent; border-bottom: 11px solid #cfcfcf; }
.vscroll { width: 22px; display: flex; flex-direction: column; align-items: center; padding: 4px 0; background: #f3f3f3; }
.vscroll .track { flex: 1; }
.vscroll .thumb { width: 8px; height: 17px; border-radius: 4px; background: #6e6e6e; margin-bottom: 13px; }

.sheets { height: 31px; flex: none; display: flex; align-items: flex-start; padding-left: 16px; }
.sheets > button { width: 32px; height: 30px; }
.sheets > a { height: 20px; margin-top: 6px; padding: 0 12px; font-size: 13px; line-height: 19px; border-right: 1px solid #ccc; }
.sheets > .on { height: 27px; margin: 0 5px; padding: 3px 7px; background: #fff; border: 0; font-weight: 600; border-radius: 0 0 6px 6px; }
.sheets .on span { display: block; border-bottom: 2px solid #1e6b45; height: 21px; }
.sheets .plus { margin-left: 33px; }
.hscroll { margin-left: auto; width: 546px; padding-top: 8px; display: flex; align-items: center; gap: 5px; padding-right: 27px; }
.hscroll .dots { margin-right: 13px; }
.bar { flex: 1; }
.bar .thumb { display: block; width: 271px; height: 9px; border-radius: 5px; background: #6e6e6e; }

.status { height: 22px; flex: none; display: flex; align-items: center; background: #f3f3f3; padding: 0 8px 0 11px; font-size: 11px; position: relative; }
.acc { gap: 3px; margin-left: 19px; }
.acc b { font-weight: 600; }
.stats { display: flex; gap: 15px; margin-left: auto; margin-right: 17px; }
.views { display: flex; }
.views button { width: 40px; height: 22px; }
.views .on { background: #e0e0e0; }
.zoom { appearance: none; width: 115px; height: 20px; margin: 0 6px 0 0; background: linear-gradient(#777, #777) center / 100% 1px no-repeat; }
.zoom::-webkit-slider-thumb { appearance: none; width: 5px; height: 11px; background: #555; }
.pct100 { margin-left: 14px; }
.openapp { position: absolute; right: 119px; top: -6px; width: 160px; height: 28px; background: rgba(38, 38, 38, .78); display: flex; justify-content: flex-end; }
.openapp a { width: 78px; display: flex; align-items: center; justify-content: center; gap: 3px; background: #565656; color: #fff; }

.taskbar { height: 40px; flex: none; display: flex; background: #1b282c; }
.start { width: 48px; }
.tsearch { width: 288px; display: flex; align-items: center; gap: 10px; padding: 0 1px 0 12px; background: #f1f1f1; border: 1px solid #cfcfcf; }
.tsearch input { flex: 1; font-size: 14px; }
.tsearch input::placeholder { color: #444; opacity: 1; }
.task { width: 43px; margin: 0 3px; border-bottom: 2px solid transparent; }
.task.open { border-bottom-color: #76b9ed; }
.task.active { background: #45545a; width: 47px; margin: 0 1px; }
.tsearch + .task { margin-right: 4px; }
.zm { width: 24px; height: 24px; border-radius: 50%; background: #0b5cff; color: #fff; font: 700 11px/22px "Noto Sans", sans-serif; text-align: center; }
.tray { margin-left: auto; display: flex; align-items: stretch; color: #fff; }
.tray button { width: 24px; }
.clock { width: 64px; display: flex; flex-direction: column; align-items: center; justify-content: center; line-height: 18px; font-size: 11px; }
.tray .note { width: 40px; position: relative; }
.badge { position: absolute; left: 18px; top: 17px; width: 18px; height: 18px; border-radius: 50%; background: #4a5357; border: 1px solid #a5adb0; font-size: 10px; line-height: 16px; text-align: center; }
.edge { width: 5px; margin-left: 8px; border-left: 1px solid #667; }
```
FILE: app.js
```js
const letters = "ABCDEFGHIJKLMNOPQRST".split("");
const widths = { B: 107, D: 98 };
const selected = ["G", "H", "I", "J"];

const cols = document.getElementById("cols");
cols.innerHTML = '<col style="width:33px">' + letters.map(l => `<col style="width:${widths[l] || 64}px">`).join("");

document.getElementById("letters").innerHTML =
  '<tr><th><span class="corner"></span></th>' +
  letters.map(l => `<th class="${selected.includes(l) ? "sel" : ""}">${l}</th>`).join("") + "</tr>";

const titles = ["MFR", "LISTED SKU", "MFR SKU", "ASIN", "Disti", "MAP", "Stock", "2-Jul", "15-Jul", "Diff",
  "rice Chang", "e than 10%", "New Cost", "Shipping", "Weight", "Total Cost", "Refferral", "BE", "Tax 20%", ""];

const full = [
  [5509, "Western D", "SY_WD6005FFBX", "WD6005FFBX", "B0D1V42F9B", "SY", "", "30", "147.8", "147.57", "FALSE", "0%", "0", "147.57", "5", "0.68", "152.57", "7%", "0.93", "20%", ""],
  [5510, "SanDisk", "SY_WDBAYN0010", "WDBAYN0010", "B097TTZD48", "SY", "", "102", "64.95", "64.86", "FALSE", "0%", "0", "64.86", "5", "0.1", "69.86", "7%", "0.93", "20%", ""],
  [5511, "Western D", "SY_WDBC3C0020B", "WDBC3C0020", "B07GKK79R5", "SY", "", "0", "68.62", "68.51", "FALSE", "0%", "0", "68.51", "5", "0.24", "73.51", "7%", "0.93", "20%", ""],
  [5512, "ViewSonic", "SY_XG2431", "XG2431", "B097S9SYM5", "SY", "", "0", "194.42", "194.42", "TRUE", "0%", "0", "194.42", "5", "8.7", "199.42", "7%", "0.93", "20%", ""],
  [5513, "#N/A", "SY_BE500G2-UK", "0", "#N/A", "#N/A", "#N/A", "#N/A", "#N/A", "#N/A", "#N/A", "#N/A", "#N/A", "#N/A", "#N/A", "#N/A", "#N/A", "#N/A", "#N/A", "#N/A", "#N/A"]
];

const short = [
  ["EX_0623B001", "B01EFL35OW", "0.150124"], ["EX_1T02R70NL0", "B01N3OJ0MC", "0.150019"],
  ["EX_1T02R7ANL0", "B01N0A20MP", "0.143244"], ["EX_1T02R9CNL0", "B01MRGSTFS", "0.141686"],
  ["EX_1T02YJ0NL0", "B0CGRYLPH6", "0.140821"], ["EX_1T02YJANL0", "B0CGRVP1PY", "0.131641"],
  ["EX_1T02YJBNL0", "B0CGRWW9MM", "0.131641"], ["EX_23ND-CKSE-WW", "B0CMV8H89P", "0.149916"],
  ["EX_24B3CA2", "B0CRDMGPZD", "0.069995"], ["EX_50BDL3650Q/00", "B0CD2L2QKV", "0.150005"],
  ["EX_65BDL3650Q/00", "B0CD2K9L2S", "0.149997"], ["EX_988-000551", "B07W6JBTXW", "0.119955"],
  ["EX_AG456UCZD", "B0CX5K5HKC", "0.069995"], ["EX_B11B261401BY", "B09QD66PDL", "0.069999"],
  ["EX_C13T11C340", "B0BKPTNRGP", "0.149942"], ["EX_CAA002BT1MWH", "B08558JLYJ", "0.150093"]
];
const rows = full.concat(short.map((s, i) => {
  const row = [5514 + i, ...Array(20).fill("")];
  row[2] = s[0];
  row[4] = s[1];
  row[17] = s[2];
  return row;
}));

const flagged = ["J", "L", "M", "P", "R", "K"];
const quick = '<span class="handle"></span><button class="quickbtn" aria-label="Quick analysis"><svg width="14" height="13" viewBox="0 0 14 13"><path d="M5 1.500h8.500v10H3V8.500h7V5H5z" fill="#fff" stroke="#444"/><path d="M0 7h4l-1 4H0zM2 2h4v4H2z" fill="#f0a050" stroke="#d9731a"/></svg></button>';

function cell(text, n, i) {
  const l = letters[i];
  const cls = [];
  if (text === "#N/A" || "EF".includes(l) || (l === "J" && text)) cls.push("c");
  else if (/^[\d.]+%?$/.test(text)) cls.push("r");
  if (l === "B" && n > 5513 && text.length > 13) cls.push("spill");
  if (l === "D" && text === "B0CGRWW9MM") cls.push("spill");
  if (l === "R" && n < 5514) cls.push("be");
  if (n === 5511 && selected.includes(l)) cls.push("above");
  if (n === 5512) {
    if (l === "F" || l === "J") cls.push("edge-l");
    if ("HIJ".includes(l)) cls.push("pick");
    if (selected.includes(l)) cls.push("bot");
  }
  if (n === 5513 && flagged.includes(l)) cls.push("err");
  const extra = n === 5513 && l === "K" ? quick : "";
  if (extra) cls.push("quickcell");
  return `<td class="${cls.join(" ")}">${text}${extra}</td>`;
}

document.getElementById("cells").innerHTML =
  '<tr class="head"><th>1</th>' + titles.map(t => `<td>${t}</td>`).join("") + "</tr>" +
  rows.map(([n, ...v]) => `<tr><th class="${n === 5512 ? "sel" : ""}">${n}</th>${v.map((t, i) => cell(t, n, i)).join("")}</tr>`).join("");
```
